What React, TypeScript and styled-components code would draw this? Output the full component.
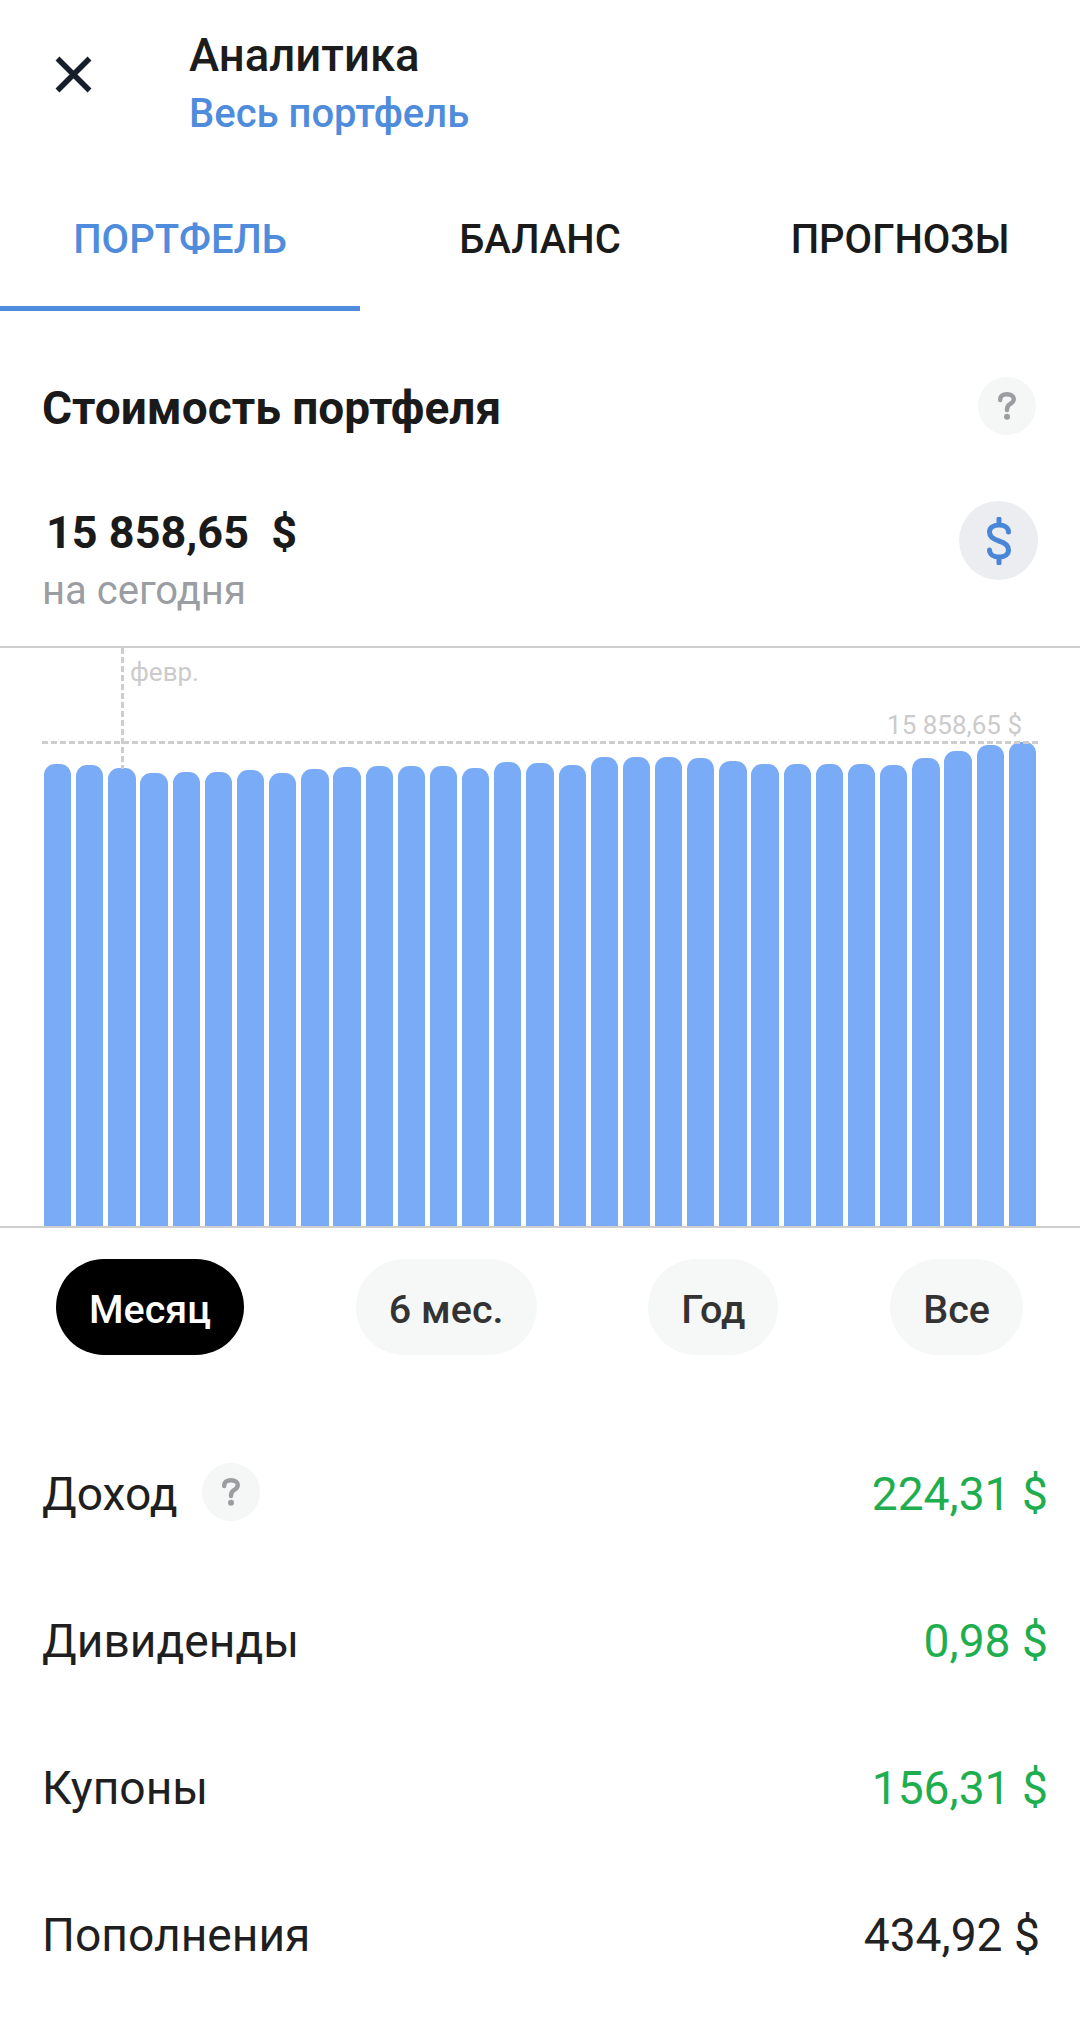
import React from "react";
import styled, { createGlobalStyle } from "styled-components";

const Global = createGlobalStyle`
  html, body { margin: 0; padding: 0; background: #fff; }
  body { font-family: Roboto, "Noto Sans", sans-serif; overflow: hidden; }
`;

const Page = styled.div`
  width: 1080px;
  height: 2032px;
  overflow: hidden;
  background: #fff;
  color: #1a1a1a;
`;

const Header = styled.header`
  display: flex;
  padding: 31px 0 0 55px;
  height: 138px;
  box-sizing: border-box;
`;

const CloseButton = styled.div`
  width: 37px;
  height: 37px;
  margin-top: 25px;
  margin-right: 97px;
  flex: none;
`;

const HeaderText = styled.div`
  display: flex;
  flex-direction: column;
  gap: 8px;
`;

const Title = styled.div`
  font-size: 45.5px;
  line-height: 50px;
  font-weight: 500;
  color: #1c1c1c;
`;

const Subtitle = styled.div`
  font-size: 40px;
  line-height: 50px;
  font-weight: 500;
  color: #4f8cdc;
`;

const Tabs = styled.nav`
  display: grid;
  grid-template-columns: repeat(3, 1fr);
  margin-top: 30px;
`;

const Tab = styled.div<{ $active?: boolean }>`
  height: 143px;
  box-sizing: border-box;
  padding-top: 48px;
  text-align: center;
  font-size: 40px;
  line-height: 48px;
  font-weight: 500;
  color: ${(p) => (p.$active ? "#4f8cdc" : "#1a1a1a")};
  border-bottom: 5px solid ${(p) => (p.$active ? "#4f8cdc" : "transparent")};
`;

const SectionHead = styled.div`
  display: flex;
  justify-content: space-between;
  align-items: center;
  margin-top: 66px;
  padding: 0 44px 0 42px;
  height: 58px;
`;

const SectionTitle = styled.h2`
  margin: 0;
  font-size: 46px;
  line-height: 60px;
  font-weight: 700;
  color: #1a1a1a;
  position: relative;
  top: 2px;
`;

const HelpBadge = styled.div`
  width: 58px;
  height: 58px;
  border-radius: 50%;
  background: #f5f6f6;
  display: flex;
  align-items: center;
  justify-content: center;
  flex: none;
`;

const Summary = styled.div`
  display: flex;
  justify-content: space-between;
  align-items: flex-start;
  padding: 0 42px 0 42px;
  margin-top: 70px;
  height: 141px;
`;

const SummaryText = styled.div`
  display: flex;
  flex-direction: column;
`;

const Amount = styled.div`
  font-size: 45px;
  line-height: 56px;
  font-weight: 700;
  color: #1a1a1a;
  padding-left: 4px;
  white-space: pre;
`;

const Caption = styled.div`
  font-size: 40px;
  line-height: 48px;
  margin-top: 6px;
  color: #9a9da2;
`;

const CurrencyBadge = styled.div`
  width: 79px;
  height: 79px;
  margin-top: -4px;
  border-radius: 50%;
  background: #ebedf0;
  display: flex;
  align-items: center;
  justify-content: center;
`;

const Chart = styled.section`
  position: relative;
  height: 582px;
  box-sizing: border-box;
  border-top: 2px solid #cfcfcf;
  border-bottom: 2px solid #cfcfcf;
  padding: 0 44px 0 44px;
  display: flex;
  align-items: flex-end;
`;

const Bars = styled.div`
  display: flex;
  align-items: flex-end;
  justify-content: space-between;
  width: 100%;
  height: 100%;
`;

const Bar = styled.div`
  width: 27.3px;
  background: #7aabf7;
  border-radius: 11px 11px 0 0;
`;

const VGuide = styled.div`
  position: absolute;
  left: 121px;
  top: 0;
  width: 3px;
  height: 121px;
  background: repeating-linear-gradient(to bottom, #cdcdcd 0 6px, transparent 6px 9px);
`;

const HGuide = styled.div`
  position: absolute;
  left: 42px;
  width: 996px;
  top: 93px;
  height: 3px;
  background: repeating-linear-gradient(to right, #cdcdcd 0 6px, transparent 6px 9px);
`;

const MonthLabel = styled.div`
  position: absolute;
  left: 130px;
  top: 9px;
  font-size: 26px;
  line-height: 30px;
  color: #cbcbcb;
`;

const ValueLabel = styled.div`
  position: absolute;
  right: 58px;
  top: 62px;
  font-size: 26px;
  line-height: 30px;
  color: #cbcbcb;
`;

const Periods = styled.div`
  display: flex;
  justify-content: space-between;
  padding: 0 57px 0 56px;
  margin-top: 31px;
`;

const Period = styled.div<{ $active?: boolean }>`
  height: 96px;
  padding: 4px 33px 0;
  box-sizing: border-box;
  border-radius: 48px;
  display: flex;
  align-items: center;
  font-size: 39.5px;
  font-weight: 500;
  background: ${(p) => (p.$active ? "#000" : "#f6f8f7")};
  color: ${(p) => (p.$active ? "#fff" : "#333")};
`;

const Rows = styled.div`
  display: flex;
  flex-direction: column;
  margin-top: 65px;
`;

const Row = styled.div`
  height: 147px;
  display: flex;
  align-items: center;
  justify-content: space-between;
  padding: 0 32px 0 42px;
`;

const RowLabel = styled.div`
  display: flex;
  align-items: center;
  gap: 24px;
  font-size: 46.2px;
  color: #1f1f1f;
`;

const RowValue = styled.div<{ $green?: boolean; $inset?: boolean }>`
  font-size: 46.2px;
  color: ${(p) => (p.$green ? "#1fae4f" : "#222")};
  margin-right: ${(p) => (p.$inset ? "8px" : "0")};
`;

const SmallHelp = styled(HelpBadge)`
  margin-top: -4px;
`;

const tops = [
  764, 765, 767.7, 772.7, 772, 772, 770, 773, 768.7, 767, 766.3, 766.3, 766.3,
  767.7, 762.3, 763, 765, 757, 757, 757, 758, 761, 764, 764, 764, 764, 764.5,
  758.3, 751.3, 744.7, 742.3,
];
const BASE = 1226;

const CloseIcon = () => (
  <svg width="37" height="37" viewBox="0 0 37 37" fill="none">
    <path d="M2.5 2.5L34.5 34.5M34.5 2.5L2.5 34.5" stroke="#161e2c" strokeWidth="5.5" />
  </svg>
);

const QuestionIcon = () => (
  <svg width="18" height="28" viewBox="0 0 18 28" fill="none">
    <path
      d="M2.2 8C2.2 3.8 5 2.2 9 2.2C13 2.2 15.8 4 15.8 7C15.8 9.8 14 11 11.6 12.4C9.6 13.6 9 15 9 18"
      stroke="#9b9da0"
      strokeWidth="4.4"
      strokeLinecap="round"
    />
    <circle cx="9" cy="24.8" r="3" fill="#9b9da0" />
  </svg>
);

const DollarIcon = () => (
  <svg width="24" height="48" viewBox="0 0 24 48" fill="none">
    <path
      d="M12 2V8M21.5 15C21.5 10.5 17 8 12 8C6 8 2.5 11 2.5 15C2.5 20 7 22.5 12 24C17 25.5 21.5 28 21.5 33C21.5 37 18 40 12 40C7 40 2.5 37.5 2.5 33M12 40V46"
      stroke="#4a86d8"
      strokeWidth="5"
      strokeLinecap="round"
    />
  </svg>
);

export default function App() {
  return (
    <Page>
      <Global />
      <Header>
        <CloseButton>
          <CloseIcon />
        </CloseButton>
        <HeaderText>
          <Title>Аналитика</Title>
          <Subtitle>Весь портфель</Subtitle>
        </HeaderText>
      </Header>
      <Tabs>
        <Tab $active>ПОРТФЕЛЬ</Tab>
        <Tab>БАЛАНС</Tab>
        <Tab>ПРОГНОЗЫ</Tab>
      </Tabs>
      <SectionHead>
        <SectionTitle>Стоимость портфеля</SectionTitle>
        <HelpBadge>
          <QuestionIcon />
        </HelpBadge>
      </SectionHead>
      <Summary>
        <SummaryText>
          <Amount>15 858,65  $</Amount>
          <Caption>на сегодня</Caption>
        </SummaryText>
        <CurrencyBadge>
          <DollarIcon />
        </CurrencyBadge>
      </Summary>
      <Chart>
        <Bars>
          {tops.map((t, i) => (
            <Bar key={i} style={{ height: BASE - t }} />
          ))}
        </Bars>
        <VGuide />
        <HGuide />
        <MonthLabel>февр.</MonthLabel>
        <ValueLabel>15 858,65 $</ValueLabel>
      </Chart>
      <Periods>
        <Period $active>Месяц</Period>
        <Period>6 мес.</Period>
        <Period>Год</Period>
        <Period>Все</Period>
      </Periods>
      <Rows>
        <Row>
          <RowLabel>
            Доход
            <SmallHelp>
              <QuestionIcon />
            </SmallHelp>
          </RowLabel>
          <RowValue $green>224,31 $</RowValue>
        </Row>
        <Row>
          <RowLabel>Дивиденды</RowLabel>
          <RowValue $green>0,98 $</RowValue>
        </Row>
        <Row>
          <RowLabel>Купоны</RowLabel>
          <RowValue $green>156,31 $</RowValue>
        </Row>
        <Row>
          <RowLabel>Пополнения</RowLabel>
          <RowValue $inset>434,92 $</RowValue>
        </Row>
      </Rows>
    </Page>
  );
}
